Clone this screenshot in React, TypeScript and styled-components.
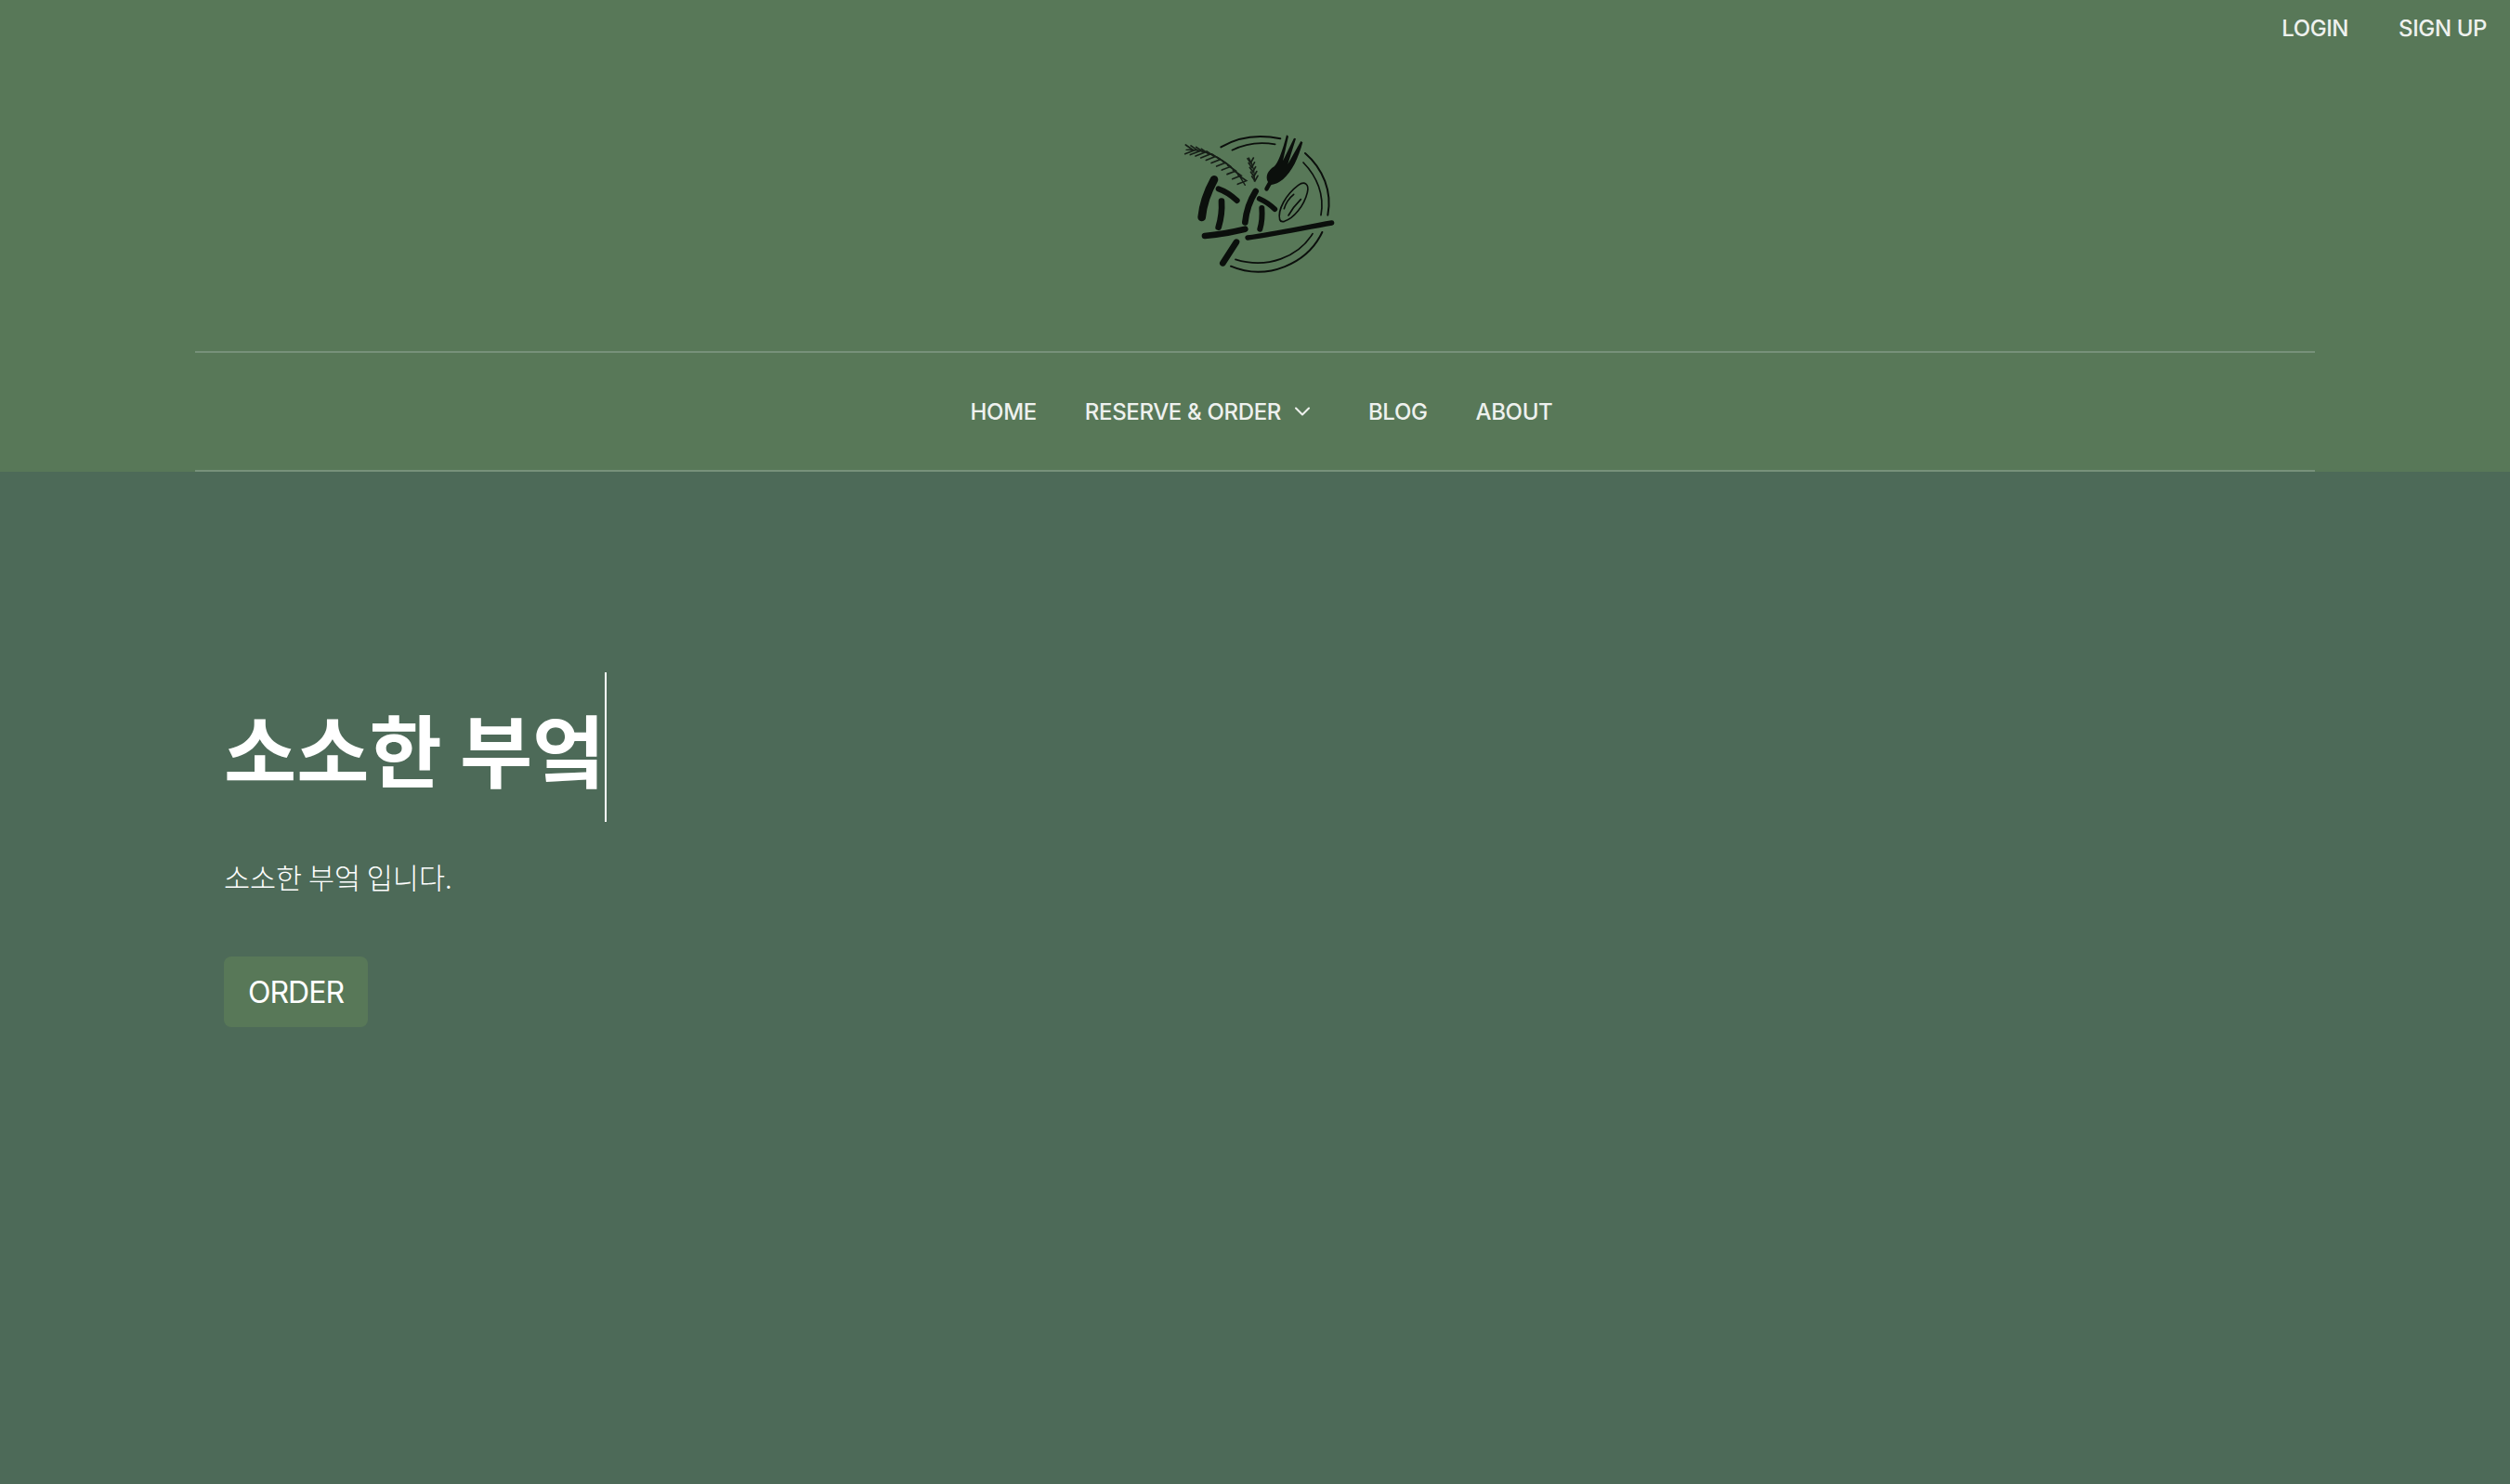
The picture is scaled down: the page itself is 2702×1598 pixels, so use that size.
import * as React from "react";
import styled, { createGlobalStyle } from "styled-components";
import { ChevronDown } from "lucide-react";

const GlobalStyle = createGlobalStyle`
  html, body {
    margin: 0;
    padding: 0;
    background: #4d6a58;
  }
`;

const SPage = styled.div`
  width: 100%;
  min-height: 1598px;
  background: #4d6a58;
  color: #fff;
  font-family: "Inter", "Noto Sans CJK KR", sans-serif;
`;

const SHeader = styled.header`
  background: #587858;
  height: 508px;
  display: flex;
  flex-direction: column;
`;

const STopBar = styled.div`
  height: 60px;
  display: flex;
  justify-content: flex-end;
  gap: 54px;
  padding: 0 25px 0 0;
  align-items: center;
`;

const STopLink = styled.a`
  font-size: 24px;
  font-weight: 500;
  letter-spacing: -0.4px;
  color: #eef1ee;
`;

const SLogoArea = styled.div`
  height: 318px;
  display: flex;
  justify-content: center;
  align-items: flex-start;
  padding-top: 60px;
  box-sizing: border-box;
`;

const SNav = styled.nav`
  margin: 0 210px;
  height: 130px;
  box-sizing: border-box;
  padding-left: 14px;
  border-top: 2px solid #77917a;
  border-bottom: 2px solid #77917a;
  display: flex;
  justify-content: center;
  align-items: center;
`;

const SNavItem = styled.a<{ $wide?: boolean }>`
  display: flex;
  align-items: center;
  gap: 9px;
  padding: 0 ${(p) => (p.$wide ? "31px" : "26px")} 0 26px;
  font-size: 24px;
  font-weight: 500;
  letter-spacing: -0.35px;
  color: #eef1ee;
`;

const SHero = styled.main`
  padding: 216px 0 0 241px;
`;

const SHeadingRow = styled.div`
  display: flex;
  align-items: stretch;
  height: 161px;
`;

const SHeading = styled.h1`
  margin: 0;
  font-family: "Noto Sans CJK KR", sans-serif;
  font-size: 85px;
  font-weight: 700;
  line-height: 161px;
  color: #fff;
  white-space: pre;
`;

const SCaret = styled.span`
  width: 2px;
  background: #fff;
`;

const SLead = styled.p`
  margin: 37px 0 0;
  font-family: "Noto Sans CJK KR", sans-serif;
  font-size: 30.5px;
  font-weight: 300;
  line-height: 44px;
  color: #fff;
`;

const SOrderButton = styled.button`
  display: block;
  margin-top: 64px;
  width: 155px;
  height: 76px;
  border: 0;
  border-radius: 8px;
  background: #587858;
  color: #fff;
  font-family: "Inter", sans-serif;
  font-size: 32px;
  font-weight: 400;
  letter-spacing: -1px;
`;

const SLogo = styled.svg`
  display: block;
  width: 220px;
  height: 190px;
`;

const INK = "#0b0f0c";

// barbs of the wheat ear, along its stem
const mainEar = Array.from({ length: 11 }, (_, i) => {
  const t = i / 10;
  return { x: 118 + 170 * t, y: 122 + 20 * t + 78 * t * t };
});
const smallEar = Array.from({ length: 5 }, (_, i) => {
  const t = i / 4;
  return { x: 314 + 14 * t, y: 158 + 58 * t };
});

const Logo = () => (
  <SLogo viewBox="0 0 660 570" fill="none" stroke={INK} strokeLinecap="round">
    <g strokeWidth="6">
      <path d="M220 115 C280 80 350 75 412 88" />
      <path d="M492 135 C550 185 580 260 565 335" />
      <path d="M547 390 C500 490 370 550 252 500" />
    </g>
    <g strokeWidth="5">
      <path d="M256 125 C300 103 350 98 395 106" />
      <path d="M486 165 C530 210 555 270 543 335" />
      <path d="M516 395 C470 470 370 510 267 478" />
    </g>

    <g strokeWidth="5" opacity="0.85">
      <path d="M108 124 C180 120 260 165 298 238" strokeWidth="4" />
      {mainEar.map((p, i) => (
        <path key={i} d={`M${p.x - 12} ${p.y - 14} L${p.x + 14} ${p.y + 4} L${p.x - 14} ${p.y + 15}`} />
      ))}
      <path d="M310 150 C322 170 330 195 328 225" strokeWidth="4" />
      {smallEar.map((p, i) => (
        <path key={i} d={`M${p.x - 8} ${p.y - 6} L${p.x + 2} ${p.y + 8} L${p.x + 11} ${p.y - 8}`} />
      ))}
    </g>

    <path
      fill={INK}
      stroke="none"
      d="M432 76 L438 80 L420 160 L456 86 L462 88 L436 170 L478 96 L484 100 C470 150 450 195 420 220 C405 232 392 235 382 238 L372 256 C366 260 358 254 362 246 L372 228 C362 210 372 190 392 178 C404 168 418 130 432 76 Z"
    />

    <g strokeWidth="5">
      <path d="M410 350 C402 318 430 268 470 238 C490 224 506 234 499 262 C488 306 455 345 425 355 C418 357 412 355 410 350 Z" />
      <path d="M455 268 C440 280 430 295 424 314" />
      <path d="M478 284 C462 300 448 318 438 336" />
    </g>

    <g>
      <path d="M198 220 C176 260 162 300 158 342" strokeWidth="26" />
      <path d="M212 250 C235 258 255 272 272 288" strokeWidth="18" />
      <path d="M222 290 C224 320 220 348 212 374" strokeWidth="20" />
      <path d="M168 402 C212 398 256 390 298 380" strokeWidth="20" />
      <path d="M332 258 C315 285 302 320 298 358" strokeWidth="20" />
      <path d="M344 282 C362 290 380 302 394 316" strokeWidth="17" />
      <path d="M352 312 C354 338 352 360 346 380" strokeWidth="18" />
      <path d="M306 408 C400 395 490 375 578 360" strokeWidth="16" />
      <path d="M270 422 L226 490" strokeWidth="20" />
    </g>
  </SLogo>
);

const App = () => {
  return (
    <SPage>
      <GlobalStyle />
      <SHeader>
        <STopBar>
          <STopLink>LOGIN</STopLink>
          <STopLink>SIGN UP</STopLink>
        </STopBar>
        <SLogoArea>
          <Logo />
        </SLogoArea>
        <SNav>
          <SNavItem>HOME</SNavItem>
          <SNavItem $wide>
            RESERVE &amp; ORDER
            <ChevronDown size={28} strokeWidth={1.8} />
          </SNavItem>
          <SNavItem>BLOG</SNavItem>
          <SNavItem>ABOUT</SNavItem>
        </SNav>
      </SHeader>
      <SHero>
        <SHeadingRow>
          <SHeading>소소한 부엌</SHeading>
          <SCaret />
        </SHeadingRow>
        <SLead>소소한 부엌 입니다.</SLead>
        <SOrderButton>ORDER</SOrderButton>
      </SHero>
    </SPage>
  );
};

export default App;
